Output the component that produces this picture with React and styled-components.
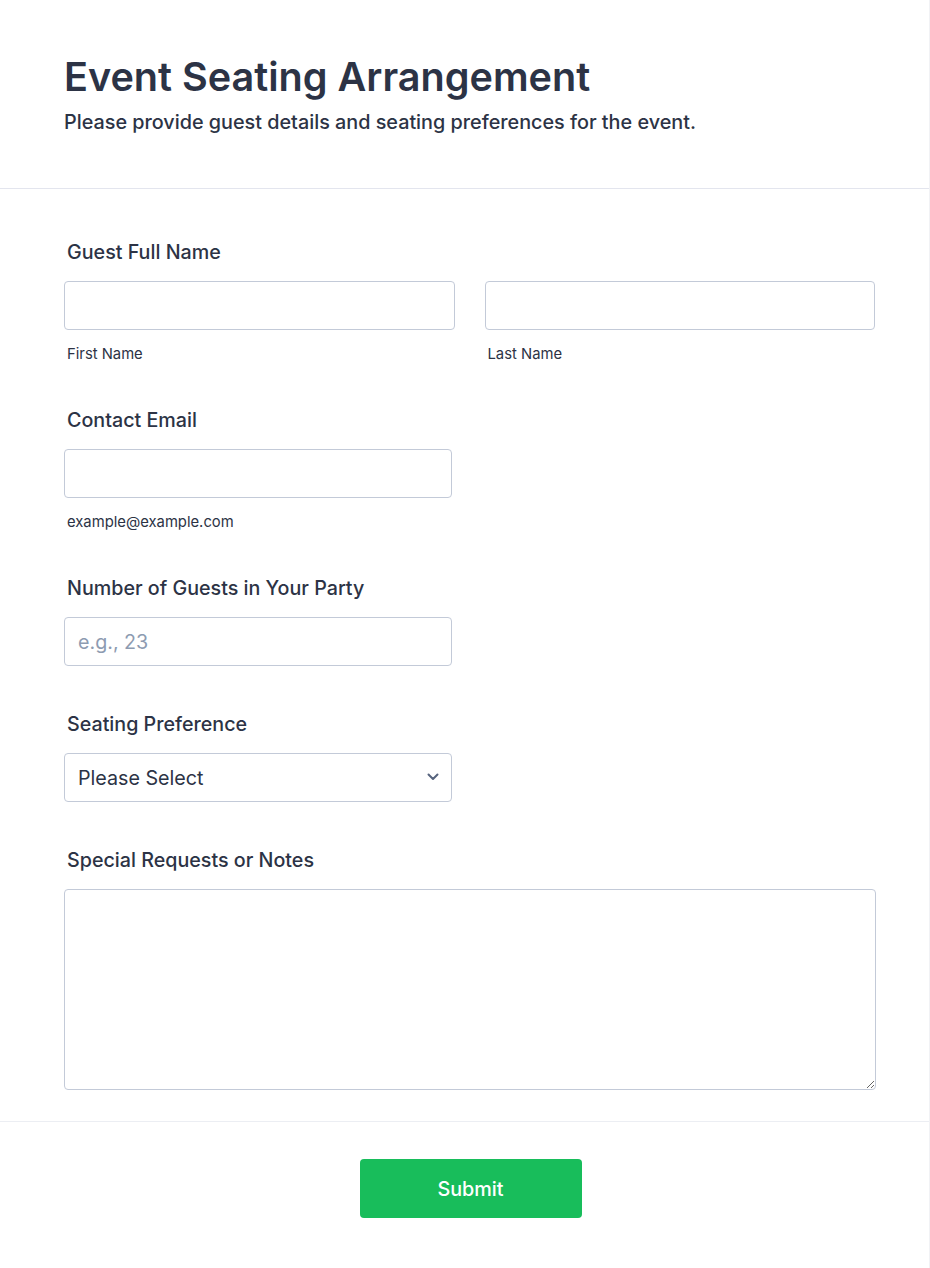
import styled, { createGlobalStyle } from "styled-components";

const GlobalStyle = createGlobalStyle`
  html, body {
    margin: 0;
    padding: 0;
    background: #ffffff;
  }
  body {
    font-family: Inter, "Noto Sans", sans-serif;
    color: #2c3345;
  }
  * {
    box-sizing: border-box;
  }
`;

const Card = styled.form`
  width: 930px;
  min-height: 1268px;
  background: #ffffff;
  border-right: 1px solid #f1f2f5;
  border-bottom: 1px solid #f1f2f5;
`;

const Header = styled.header`
  padding: 53px 64px 54px 64px;
  border-bottom: 1px solid #e3e5ee;
`;

const Title = styled.h1`
  margin: 0;
  font-size: 39.6px;
  line-height: 48px;
  font-weight: 600;
  color: #2c3345;
`;

const Subtitle = styled.p`
  margin: 9px 0 0 0;
  font-size: 19.8px;
  line-height: 24px;
  font-weight: 500;
  color: #2c3345;
`;

const Body = styled.div`
  padding: 51px 54px 0 64px;
  display: flex;
  flex-direction: column;
  gap: 46px;
`;

const Field = styled.div`
  display: flex;
  flex-direction: column;
`;

const Label = styled.label`
  display: block;
  padding-left: 3px;
  margin-bottom: 17px;
  font-size: 19.7px;
  line-height: 24px;
  font-weight: 500;
  color: #2c3345;
`;

const Row = styled.div`
  display: flex;
  gap: 30px;
`;

const Col = styled.div`
  display: flex;
  flex-direction: column;
  width: ${(p) => p.$width || "391px"};
`;

const Input = styled.input`
  width: 100%;
  height: 49px;
  padding: 0 13px;
  border: 1px solid #c3cad8;
  border-radius: 4px;
  background: #ffffff;
  font-family: Inter, "Noto Sans", sans-serif;
  font-size: 19.7px;
  color: #2c3345;
  outline: none;

  &::placeholder {
    color: #8d9bb1;
  }
`;

const Sublabel = styled.span`
  display: block;
  margin-top: 16px;
  padding-left: 3px;
  font-size: 14.8px;
  line-height: 16px;
  color: #2c3345;
`;

const SelectWrap = styled.div`
  position: relative;
  width: 388px;
`;

const Select = styled.select`
  appearance: none;
  width: 100%;
  height: 49px;
  padding: 0 40px 0 13px;
  border: 1px solid #c3cad8;
  border-radius: 4px;
  background: #ffffff;
  font-family: Inter, "Noto Sans", sans-serif;
  font-size: 19.7px;
  color: #2c3345;
  outline: none;
`;

const Chevron = styled.svg`
  position: absolute;
  right: 13px;
  top: 20px;
  pointer-events: none;
`;

const TextArea = styled.textarea`
  width: 812px;
  height: 201px;
  padding: 12px 13px;
  border: 1px solid #c3cad8;
  border-radius: 4px;
  background: #ffffff;
  font-family: Inter, "Noto Sans", sans-serif;
  font-size: 19.7px;
  color: #2c3345;
  outline: none;
`;

const Footer = styled.div`
  margin-top: 31px;
  border-top: 1px solid #eceef3;
  padding: 37px 0 50px 12px;
  display: flex;
  justify-content: center;
`;

const SubmitButton = styled.button`
  width: 222px;
  height: 59px;
  border: none;
  border-radius: 4px;
  background: #18bd5b;
  color: #ffffff;
  font-family: Inter, "Noto Sans", sans-serif;
  font-size: 19.8px;
  font-weight: 500;
  cursor: pointer;
`;

const App = () => {
  return (
    <>
      <GlobalStyle />
      <Card onSubmit={(e) => e.preventDefault()}>
        <Header>
          <Title>Event Seating Arrangement</Title>
          <Subtitle>
            Please provide guest details and seating preferences for the event.
          </Subtitle>
        </Header>

        <Body>
          <Field>
            <Label>Guest Full Name</Label>
            <Row>
              <Col>
                <Input type="text" name="first" />
                <Sublabel>First Name</Sublabel>
              </Col>
              <Col>
                <Input type="text" name="last" />
                <Sublabel>Last Name</Sublabel>
              </Col>
            </Row>
          </Field>

          <Field>
            <Label>Contact Email</Label>
            <Col $width="388px">
              <Input type="email" name="email" />
              <Sublabel>example@example.com</Sublabel>
            </Col>
          </Field>

          <Field>
            <Label>Number of Guests in Your Party</Label>
            <Col $width="388px">
              <Input type="number" name="guests" placeholder="e.g., 23" />
            </Col>
          </Field>

          <Field>
            <Label>Seating Preference</Label>
            <SelectWrap>
              <Select name="seating" defaultValue="">
                <option value="">Please Select</option>
                <option>Near the Stage</option>
                <option>Near the Exit</option>
                <option>With Family</option>
              </Select>
              <Chevron width="12" height="8" viewBox="0 0 12 8" fill="none">
                <path
                  d="M1.5 1.5 L6 6 L10.5 1.5"
                  stroke="#57647e"
                  strokeWidth="2"
                  strokeLinecap="round"
                  strokeLinejoin="round"
                />
              </Chevron>
            </SelectWrap>
          </Field>

          <Field>
            <Label>Special Requests or Notes</Label>
            <TextArea name="notes" />
          </Field>
        </Body>

        <Footer>
          <SubmitButton type="submit">Submit</SubmitButton>
        </Footer>
      </Card>
    </>
  );
};

export default App;
